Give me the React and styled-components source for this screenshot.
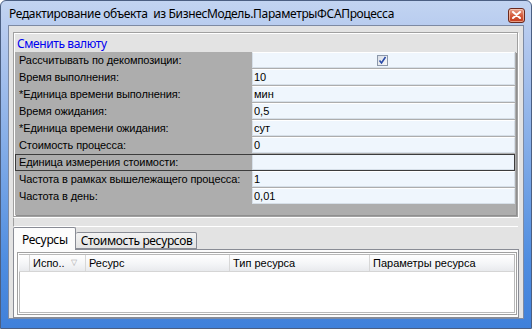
import React from "react";
import styled, { createGlobalStyle } from "styled-components";

const Global = createGlobalStyle`
  html, body { margin: 0; padding: 0; background: #ffffff; }
  body { font-family: "Liberation Sans", Arial, sans-serif; }
  * { box-sizing: border-box; }
`;

const Window = styled.div`
  width: 532px;
  height: 329px;
  display: flex;
  flex-direction: column;
  padding: 0 7px 10px 7px;
  background: linear-gradient(to bottom, #c2d4f1 0px, #b3c8ee 40px, #86aee8 140px, #4f8de0 260px, #3f80da 329px);
  border: 1px solid #4b5f82;
  border-radius: 6px 6px 0 0;
  overflow: hidden;
`;

const TitleBar = styled.div`
  height: 24px;
  flex: 0 0 24px;
  display: flex;
  align-items: center;
  justify-content: space-between;
`;

const TitleText = styled.span`
  font-family: "Noto Sans", "Open Sans", sans-serif;
  font-size: 12px;
  color: #000;
  white-space: pre;
  letter-spacing: -0.35px;
  padding-left: 1px;
`;

const CloseButton = styled.div`
  width: 17px;
  height: 15px;
  margin-right: -1px;
  margin-top: 4px;
  border: 1px solid #6b2a1e;
  border-radius: 3px;
  background: linear-gradient(to bottom, #e9a48f 0%, #d45c3d 50%, #c23a1c 100%);
  display: flex;
  align-items: center;
  justify-content: center;
  box-shadow: inset 0 0 0 1px rgba(255, 220, 200, 0.6);
`;

const Content = styled.div`
  flex: 0 0 293px;
  display: flex;
  flex-direction: column;
  background: #e3e3e3;
  border: 1px solid #7d8aa3;
  padding: 6px 4px 0 4px;
  & > * { flex-shrink: 0; }
`;

const GroupBox = styled.div`
  height: 185px;
  display: flex;
  flex-direction: column;
  border: 1px solid #a0a0a0;
  box-shadow: inset 1px 1px 0 #ffffff, 1px 1px 0 #ffffff;
  padding: 1px;
  margin-right: 1px;
`;

const LinkRow = styled.div`
  height: 18px;
  flex: 0 0 18px;
  display: flex;
  align-items: center;
  padding-left: 2px;
`;

const Link = styled.a`
  font-family: "Noto Sans", "Open Sans", sans-serif;
  font-size: 12px;
  letter-spacing: -0.4px;
  color: #0000f0;
  text-decoration: none;
  cursor: pointer;
`;

const PropPanel = styled.div`
  flex: 0 0 163px;
  background: #adadad;
  box-shadow: 1px 1px 0 #8f8f8f;
  display: flex;
  flex-direction: column;
`;

const PropRow = styled.div`
  height: 17px;
  flex: 0 0 17px;
  display: grid;
  grid-template-columns: 237px 1fr;
  margin-right: 1px;
  outline: ${(p) => (p.$focused ? "1px solid #3c3c3c" : "none")};
  outline-offset: -1px;
`;

const Label = styled.div`
  font-size: 11px;
  line-height: 16px;
  color: #000;
  padding-left: 4px;
  white-space: nowrap;
  letter-spacing: -0.1px;
`;

const Value = styled.div`
  font-size: 11px;
  line-height: 15px;
  height: 16px;
  color: #000;
  background: #eff6fd;
  border: 1px solid #d6dfe8;
  border-top-color: #ffffff;
  padding-left: 1px;
  display: flex;
  align-items: center;
  justify-content: ${(p) => (p.$center ? "center" : "flex-start")};
`;

const Check = styled.div`
  width: 11px;
  height: 11px;
  border: 1px solid #8c98aa;
  background: linear-gradient(135deg, #d9dee6, #f7f8fa);
  display: flex;
  align-items: center;
  justify-content: center;
  margin-right: 4px;
`;

const Splitter = styled.div`
  height: 9px;
  margin-top: 1px;
  margin-right: 1px;
  border-left: 1px solid #a0a0a0;
  border-bottom: 1px solid #ffffff;
`;

const TabStrip = styled.div`
  display: flex;
  align-items: flex-end;
  height: 22px;
  position: relative;
  z-index: 1;
`;

const Tab = styled.div`
  font-family: "Noto Sans", "Open Sans", sans-serif;
  font-size: 12px;
  letter-spacing: -0.35px;
  color: #000;
  height: ${(p) => (p.$active ? "23px" : "17px")};
  margin-bottom: ${(p) => (p.$active ? "-1px" : "0")};
  padding: ${(p) => (p.$active ? "0 7px 0 8px" : "0 3px 0 5px")};
  background: ${(p) => (p.$active ? "#fcfcfc" : "linear-gradient(#f2f2f2, #e3e3e3)")};
  border: 1px solid #898c95;
  border-bottom: ${(p) => (p.$active ? "none" : "1px solid #898c95")};
  border-left: ${(p) => (p.$first ? "1px solid #898c95" : "none")};
  border-radius: 2px 2px 0 0;
  display: flex;
  align-items: center;
  white-space: nowrap;
`;

const TabPage = styled.div`
  height: 69px;
  border: 1px solid #898c95;
  background: #fcfcfc;
  padding: 2px 1px 2px 3px;
`;

const Grid = styled.div`
  height: 100%;
  border: 1px solid #a0a0a0;
  box-shadow: inset 0 0 0 1px #ffffff, inset 0 0 0 2px #b9b9b9;
  padding: 2px 2px 2px 1px;
  background: #ffffff;
`;

const HeaderRow = styled.div`
  display: grid;
  grid-template-columns: 11px 56px 144px 140px 1fr;
  height: 17px;
  background: linear-gradient(#ffffff, #f4f5f7 55%, #e8eaed);
  border-bottom: 1px solid #d5d5d5;
`;

const HeaderCell = styled.div`
  font-size: 11px;
  line-height: 16px;
  color: #000;
  padding-left: 3px;
  border-right: 1px solid #d7d7d7;
  display: flex;
  align-items: center;
  justify-content: space-between;
  white-space: nowrap;
  overflow: hidden;
  &:last-child { border-right: none; }
`;

const SortGlyph = styled.span`
  color: #a8a8a8;
  font-size: 8px;
  margin-right: 8px;
`;

const rows = [
  { label: "Рассчитывать по декомпозиции:", check: true },
  { label: "Время выполнения:", value: "10" },
  { label: "*Единица времени выполнения:", value: "мин" },
  { label: "Время ожидания:", value: "0,5" },
  { label: "*Единица времени ожидания:", value: "сут" },
  { label: "Стоимость процесса:", value: "0" },
  { label: "Единица измерения стоимости:", value: "", focused: true },
  { label: "Частота в рамках вышележащего процесса:", value: "1" },
  { label: "Частота в день:", value: "0,01" },
];

export default function App() {
  return (
    <>
      <Global />
      <Window>
        <TitleBar>
          <TitleText>{"Редактирование объекта  из БизнесМодель.ПараметрыФСАПроцесса"}</TitleText>
          <CloseButton>
            <svg width="9" height="8" viewBox="0 0 9 8">
              <path d="M1 1 L8 7 M8 1 L1 7" stroke="#ffffff" strokeWidth="2" strokeLinecap="round" />
            </svg>
          </CloseButton>
        </TitleBar>
        <Content>
          <GroupBox>
            <LinkRow>
              <Link>Сменить валюту</Link>
            </LinkRow>
            <PropPanel>
              {rows.map((r) => (
                <PropRow key={r.label} $focused={r.focused}>
                  <Label>{r.label}</Label>
                  <Value $center={r.check}>
                    {r.check ? (
                      <Check>
                        <svg width="9" height="9" viewBox="0 0 9 9">
                          <path d="M1.5 4.5 L3.5 7 L7.5 1" fill="none" stroke="#2a4ba8" strokeWidth="1.6" />
                        </svg>
                      </Check>
                    ) : (
                      r.value
                    )}
                  </Value>
                </PropRow>
              ))}
            </PropPanel>
          </GroupBox>
          <Splitter />
          <TabStrip>
            <Tab $active $first>Ресурсы</Tab>
            <Tab>Стоимость ресурсов</Tab>
          </TabStrip>
          <TabPage>
            <Grid>
              <HeaderRow>
                <HeaderCell />
                <HeaderCell>
                  Испо..
                  <SortGlyph>▽</SortGlyph>
                </HeaderCell>
                <HeaderCell>Ресурс</HeaderCell>
                <HeaderCell>Тип ресурса</HeaderCell>
                <HeaderCell>Параметры ресурса</HeaderCell>
              </HeaderRow>
            </Grid>
          </TabPage>
        </Content>
      </Window>
    </>
  );
}
